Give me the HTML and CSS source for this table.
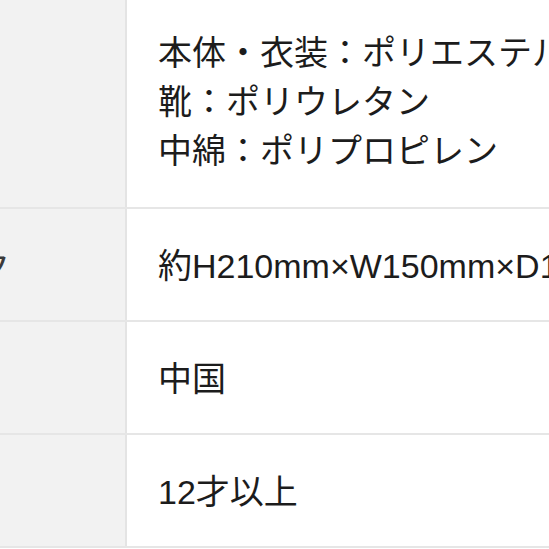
FILE: index.html
```html
<!DOCTYPE html>
<html lang="ja">
<head>
<meta charset="utf-8">
<link rel="stylesheet" href="styles.css">
</head>
<body>
<div class="spec">
  <div class="row row-first">
    <div class="label"></div>
    <div class="value">本体・衣装：ポリエステル<br>靴：ポリウレタン<br>中綿：ポリプロピレン</div>
  </div>
  <div class="row">
    <div class="label"><span class="label-text">パック</span></div>
    <div class="value">約H210mm×W150mm×D100mm</div>
  </div>
  <div class="row">
    <div class="label"></div>
    <div class="value">中国</div>
  </div>
  <div class="row">
    <div class="label"></div>
    <div class="value">12才以上</div>
  </div>
</div>
</body>
</html>
```
FILE: styles.css
```css
html, body {
  margin: 0;
  padding: 0;
  background: #ffffff;
  overflow: hidden;
}
body {
  font-family: "Liberation Sans", "Noto Sans CJK JP", sans-serif;
  color: #1c1c1c;
}
.spec {
  margin-top: -4px;
  width: 900px;
}
.row {
  display: grid;
  grid-template-columns: 127px 1fr;
  border-bottom: 2px solid #e6e6e6;
}
.label {
  background: #f2f2f2;
  border-right: 2px solid #e4e4e4;
  overflow: hidden;
  display: flex;
  align-items: center;
  justify-content: flex-end;
}
.label-text {
  font-family: "Noto Sans CJK JP", sans-serif;
  font-size: 34px;
  line-height: 49px;
  color: #3a3a3a;
  white-space: nowrap;
  margin-right: 115px;
}
.value {
  padding: 33px 31px 29px;
  font-size: 34px;
  line-height: 49px;
  white-space: nowrap;
}
.row-first .value {
  padding-bottom: 31px;
}
```
